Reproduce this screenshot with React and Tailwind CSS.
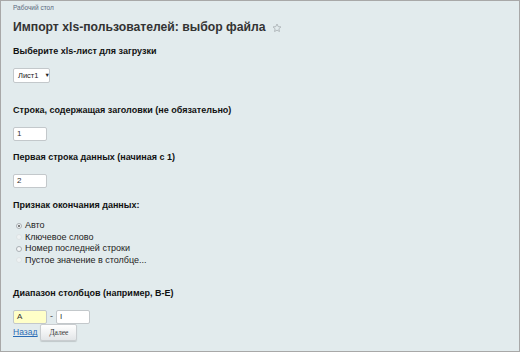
import React from "react";

function Radio({ checked, faint, label }) {
  return (
    <div className="flex items-center h-[11.5px]">
      <span
        className={
          "ml-[3px] w-[6px] h-[6px] rounded-full border flex items-center justify-center " +
          (faint ? "border-[#dde3e5] bg-[#eef2f3]" : "border-[#a9b0b4] bg-[#f4f6f7]")
        }
      >
        {checked ? <span className="w-[2.5px] h-[2.5px] rounded-full bg-[#555]" /> : null}
      </span>
      <span className="ml-[3px] text-[9px] text-[#222] leading-[11.5px]">{label}</span>
    </div>
  );
}

function Field({ value, yellow, w = "w-[34px]" }) {
  return (
    <div
      className={
        w +
        " h-[14px] border border-[#c3c8cb] rounded-[2px] flex items-center pl-[3px] text-[8px] text-[#333] leading-none " +
        (yellow ? "bg-[#ffffc8]" : "bg-white")
      }
    >
      {value}
    </div>
  );
}

export default function App() {
  return (
    <div className="w-[520px] h-[352px] bg-[#e2ebed] border border-[#a8a8a8] pl-[12px] overflow-hidden font-['Liberation_Sans',Arial,sans-serif] text-[#222]">
      <div className="mt-[3px] text-[6.5px] leading-[8px] text-[#5a6a80]">Рабочий стол</div>
      <div className="mt-[7px] flex items-center h-[16px]">
        <span className="text-[12.2px] font-bold leading-[16px] text-[#333]">
          Импорт xls-пользователей: выбор файла
        </span>
        <svg className="ml-[7px] mt-[2px]" width="10" height="10" viewBox="0 0 24 24" fill="none" stroke="#a9b0b3" strokeWidth="2" strokeLinejoin="round">
          <path d="M12 2.5l2.9 6.2 6.6.7-5 4.5 1.4 6.6L12 17.1l-5.9 3.4 1.4-6.6-5-4.5 6.6-.7z" />
        </svg>
      </div>
      <div className="mt-[10px] text-[9px] font-bold leading-[12px] text-[#111]">Выберите xls-лист для загрузки</div>
      <div className="mt-[11px] w-[37px] h-[15px] bg-white border border-[#c3c8cb] rounded-[2px] flex items-center pl-[4px] text-[7.5px] text-[#222] leading-none">
        <span>Лист1</span>
        <span className="ml-[6px] text-[5.5px]">▼</span>
      </div>
      <div className="mt-[21px] text-[9px] font-bold leading-[12px] text-[#111]">Строка, содержащая заголовки (не обязательно)</div>
      <div className="mt-[11px]">
        <Field value="1" />
      </div>
      <div className="mt-[10px] text-[9px] font-bold leading-[12px] text-[#111]">Первая строка данных (начиная с 1)</div>
      <div className="mt-[11px]">
        <Field value="2" />
      </div>
      <div className="mt-[11px] text-[9px] font-bold leading-[12px] text-[#111]">Признак окончания данных:</div>
      <div className="mt-[9px] flex flex-col">
        <Radio checked label="Авто" />
        <Radio faint label="Ключевое слово" />
        <Radio label="Номер последней строки" />
        <Radio faint label="Пустое значение в столбце..." />
      </div>
      <div className="mt-[21px] text-[9px] font-bold leading-[12px] text-[#111]">Диапазон столбцов (например, B-E)</div>
      <div className="mt-[11px] flex items-center h-[14px]">
        <Field value="A" yellow />
        <span className="mx-[3px] text-[9px] text-[#444]">-</span>
        <Field value="I" />
      </div>
      <div className="flex items-center h-[17px]">
        <a className="text-[8.5px] text-[#2a6bb5] underline leading-none">Назад</a>
        <button className="ml-[3px] w-[37px] h-[17px] rounded-[2px] border border-[#c9cdd0] bg-gradient-to-b from-white to-[#e3e6e8] shadow-[0_1px_1px_rgba(0,0,0,0.15)] text-[7.5px] text-[#333] font-['Liberation_Serif',serif] leading-none">
          Далее
        </button>
      </div>
    </div>
  );
}
